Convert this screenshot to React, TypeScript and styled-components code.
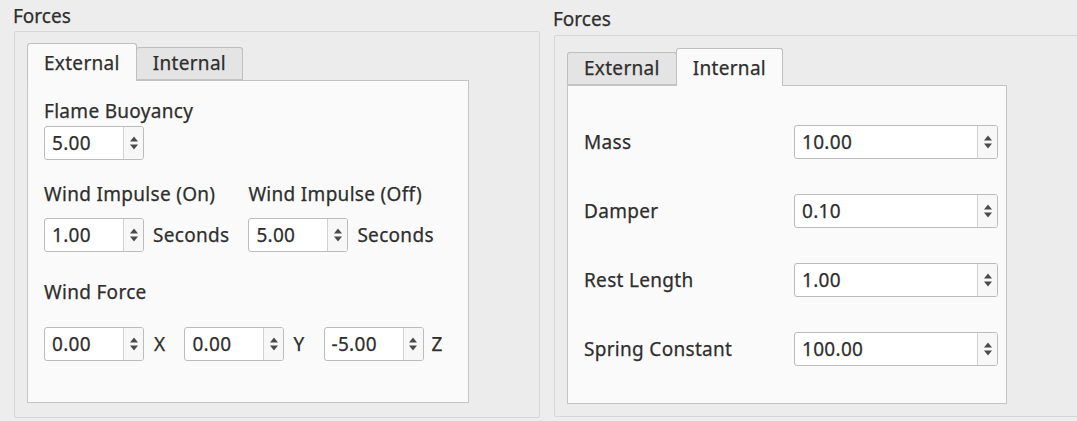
import styled, { createGlobalStyle } from "styled-components";

const GlobalStyle = createGlobalStyle`
    html, body {
        margin: 0;
        padding: 0;
        background: #ededed;
        overflow: hidden;
    }
    body {
        font-family: "Noto Sans", "Open Sans", sans-serif;
        font-size: 19px;
        line-height: 24px;
        color: #2e2e2e;
        -webkit-text-stroke: 0.25px #2e2e2e;
    }
`;

const Screen = styled.div`
    display: flex;
    width: 1077px;
    height: 421px;
`;

const Panel = styled.section<{ $width?: number; $top: number; $bottom: number }>`
    display: flex;
    flex-direction: column;
    box-sizing: border-box;
    ${({ $width }) => ($width ? `width: ${$width}px;` : "flex: 1;")}
    min-width: 0;
    padding: ${({ $top, $bottom }) => `${$top}px 0 ${$bottom}px 13px`};
`;

const Title = styled.div<{ $gap: number }>`
    margin-bottom: ${({ $gap }) => $gap}px;
`;

const GroupBox = styled.div<{ $top: number; $bottom: number; $bleed?: boolean }>`
    flex: 1;
    display: flex;
    flex-direction: column;
    margin-left: 1px;
    margin-right: ${({ $bleed }) => ($bleed ? -6 : 0)}px;
    padding: ${({ $top, $bottom }) => `${$top}px 0 ${$bottom}px 12px`};
    border: 1px solid #d6d6d6;
    border-radius: 2px;
    background: #ececec;
`;

const TabWidget = styled.div<{ $width: number }>`
    flex: 1;
    display: flex;
    flex-direction: column;
    width: ${({ $width }) => $width}px;
`;

const TabBar = styled.div`
    display: flex;
    align-items: flex-end;
    height: 37px;
    position: relative;
    z-index: 1;
`;

const Tab = styled.div<{ $active?: boolean }>`
    box-sizing: border-box;
    height: ${({ $active }) => ($active ? 38 : 33)}px;
    padding: ${({ $active }) => ($active ? "7px" : "3px")} 16px 0;
    margin-bottom: ${({ $active }) => ($active ? -1 : 0)}px;
    letter-spacing: 0.3px;
    border: 1px solid #bfbfbf;
    border-bottom: ${({ $active }) => ($active ? "none" : "1px solid #c4c4c4")};
    border-radius: 3px 3px 0 0;
    background: ${({ $active }) => ($active ? "#fafafa" : "#e4e4e4")};
    & + & {
        margin-left: -1px;
    }
`;

const Pane = styled.div<{ $top: number }>`
    flex: 1;
    box-sizing: border-box;
    padding: ${({ $top }) => $top}px 10px 0 16px;
    border: 1px solid #c4c4c4;
    background: #fafafa;
`;

const FieldLabel = styled.div<{ $top?: number; $gap?: number }>`
    margin-top: ${({ $top }) => $top ?? 0}px;
    margin-bottom: ${({ $gap }) => $gap ?? 0}px;
    letter-spacing: 0.3px;
    white-space: nowrap;
`;

const ImpulseGrid = styled.div`
    display: grid;
    grid-template-columns: auto auto;
    justify-content: start;
    column-gap: 19px;
    margin-top: 22px;
`;

const Column = styled.div`
    display: flex;
    flex-direction: column;
`;

const InlineRow = styled.div<{ $gap?: number }>`
    display: flex;
    align-items: center;
    gap: ${({ $gap }) => $gap ?? 9}px;
    white-space: nowrap;
    letter-spacing: 0.3px;
`;

const AxisRow = styled.div`
    display: flex;
    align-items: center;
    gap: 19px;
`;

const SpinFrame = styled.div<{ $width: number }>`
    display: flex;
    box-sizing: border-box;
    width: ${({ $width }) => $width}px;
    height: 34px;
    border: 1px solid #bcbcbc;
    border-radius: 3px;
    background: #fff;
    flex-shrink: 0;
`;

const SpinValue = styled.div`
    flex: 1;
    padding-left: 7px;
    line-height: 32px;
    letter-spacing: 0.3px;
`;

const SpinButtons = styled.div`
    width: 19px;
    display: flex;
    align-items: center;
    justify-content: center;
    border-left: 1px solid #d2d2d2;
    background: #f7f7f7;
    border-radius: 0 2px 2px 0;
`;

const PropertyList = styled.div`
    display: flex;
    flex-direction: column;
    gap: 35px;
`;

const PropertyRow = styled.div`
    display: grid;
    grid-template-columns: 210px 204px;
    align-items: center;
    letter-spacing: 0.3px;
`;

function SpinBox({ value, width = 100 }: { value: string; width?: number }) {
    return (
        <SpinFrame $width={width}>
            <SpinValue>{value}</SpinValue>
            <SpinButtons>
                <svg width="10" height="18" viewBox="0 0 10 18">
                    <path d="M5 2.5 L9 7.5 L1 7.5 Z" fill="#4a4a4a" />
                    <path d="M5 15.5 L9 10.5 L1 10.5 Z" fill="#4a4a4a" />
                </svg>
            </SpinButtons>
        </SpinFrame>
    );
}

function ExternalForces() {
    return (
        <Pane $top={18}>
            <FieldLabel $gap={3}>Flame Buoyancy</FieldLabel>
            <SpinBox value="5.00" />

            <ImpulseGrid>
                <Column>
                    <FieldLabel $gap={12}>Wind Impulse (On)</FieldLabel>
                    <InlineRow>
                        <SpinBox value="1.00" />
                        Seconds
                    </InlineRow>
                </Column>
                <Column>
                    <FieldLabel $gap={12}>Wind Impulse (Off)</FieldLabel>
                    <InlineRow>
                        <SpinBox value="5.00" />
                        Seconds
                    </InlineRow>
                </Column>
            </ImpulseGrid>

            <FieldLabel $top={28} $gap={23}>Wind Force</FieldLabel>
            <AxisRow>
                <InlineRow $gap={10}><SpinBox value="0.00" />X</InlineRow>
                <InlineRow $gap={9}><SpinBox value="0.00" />Y</InlineRow>
                <InlineRow $gap={8}><SpinBox value="-5.00" />Z</InlineRow>
            </AxisRow>
        </Pane>
    );
}

const springProps = [
    { label: "Mass", value: "10.00" },
    { label: "Damper", value: "0.10" },
    { label: "Rest Length", value: "1.00" },
    { label: "Spring Constant", value: "100.00" },
];

function InternalForces() {
    return (
        <Pane $top={39}>
            <PropertyList>
                {springProps.map((p) => (
                    <PropertyRow key={p.label}>
                        <span>{p.label}</span>
                        <SpinBox value={p.value} width={204} />
                    </PropertyRow>
                ))}
            </PropertyList>
        </Pane>
    );
}

function App() {
    return (
        <>
            <GlobalStyle />
            <Screen>
                <Panel $width={540} $top={4} $bottom={3}>
                    <Title $gap={3}>Forces</Title>
                    <GroupBox $top={11} $bottom={14}>
                        <TabWidget $width={442}>
                            <TabBar>
                                <Tab $active>External</Tab>
                                <Tab>Internal</Tab>
                            </TabBar>
                            <ExternalForces />
                        </TabWidget>
                    </GroupBox>
                </Panel>

                <Panel $top={7} $bottom={4}>
                    <Title $gap={4}>Forces</Title>
                    <GroupBox $top={12} $bottom={12} $bleed>
                        <TabWidget $width={440}>
                            <TabBar>
                                <Tab>External</Tab>
                                <Tab $active>Internal</Tab>
                            </TabBar>
                            <InternalForces />
                        </TabWidget>
                    </GroupBox>
                </Panel>
            </Screen>
        </>
    );
}

export default App;
